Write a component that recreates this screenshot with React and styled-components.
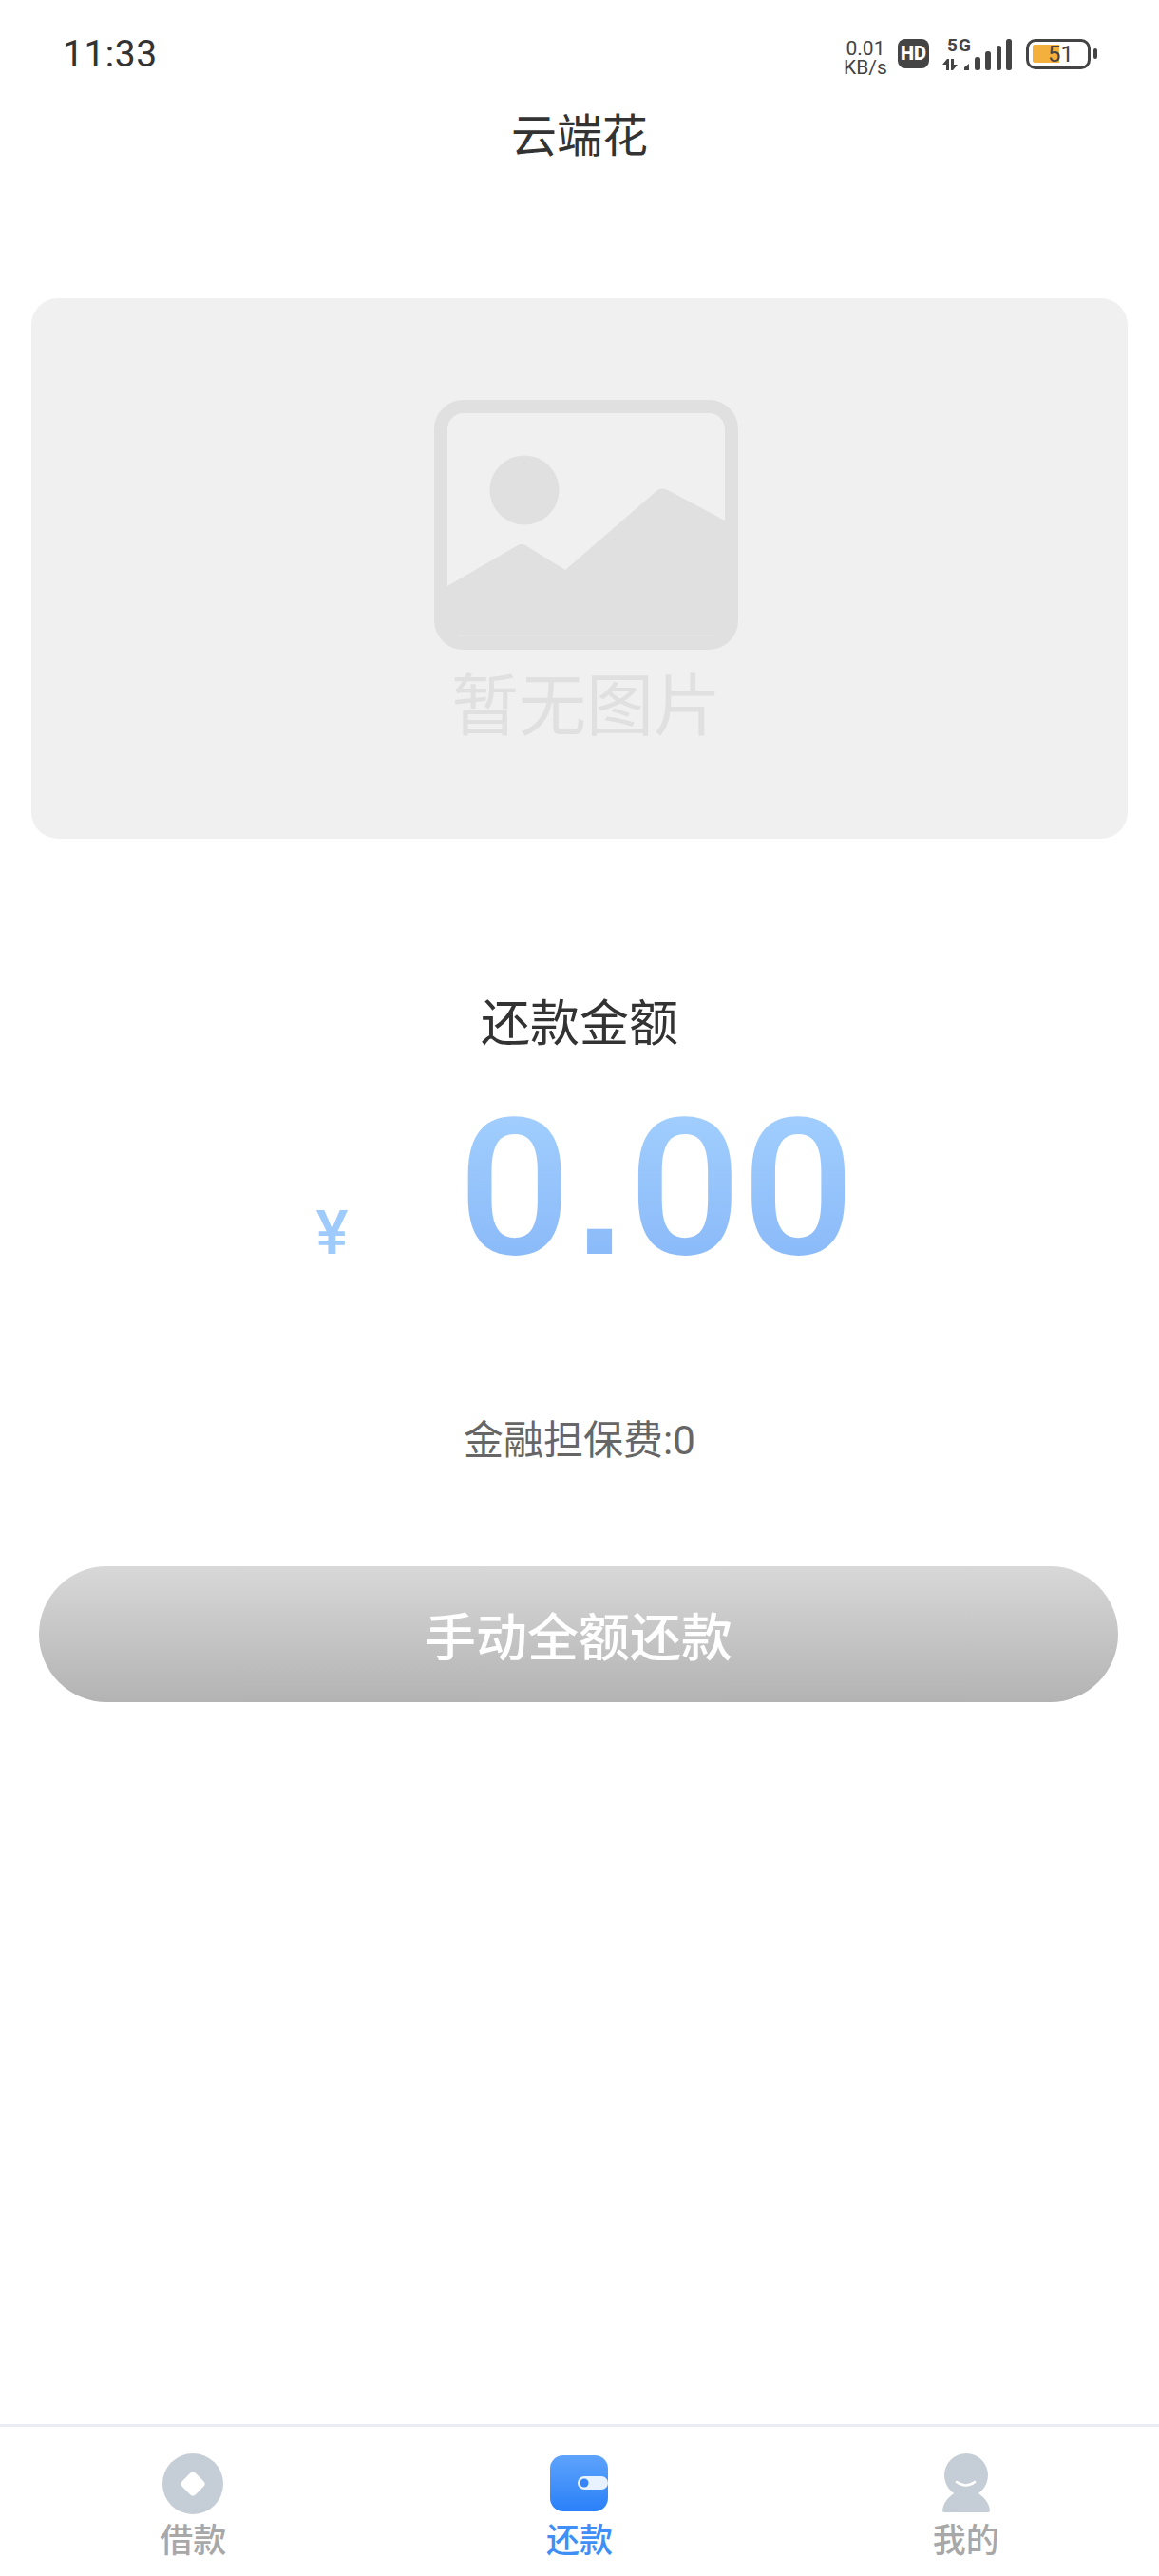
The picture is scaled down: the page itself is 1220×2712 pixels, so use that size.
import React from "react";
import styled, { createGlobalStyle } from "styled-components";

const GlobalStyle = createGlobalStyle`
  html, body {
    margin: 0;
    padding: 0;
    background: #fff;
  }
  * {
    box-sizing: border-box;
  }
`;

const CJK = `Roboto, "Noto Sans CJK SC", sans-serif`;

const Page = styled.div`
  width: 1220px;
  height: 2712px;
  display: flex;
  flex-direction: column;
  background: #fff;
  font-family: ${CJK};
  overflow: hidden;
`;

const StatusBar = styled.div`
  height: 73px;
  padding: 40px 65px 0 66px;
  display: flex;
  justify-content: space-between;
  align-items: flex-start;
  color: #444;
`;

const Time = styled.div`
  font-size: 39px;
  line-height: 34px;
  letter-spacing: 0.5px;
  color: #333;
`;

const StatusIcons = styled.div`
  display: flex;
  align-items: flex-start;
`;

const Speed = styled.div`
  width: 48px;
  margin: 1px 10px 0 0;
  font-size: 21px;
  line-height: 20px;
  text-align: center;
`;

const HdBadge = styled.div`
  width: 33px;
  height: 31px;
  margin: 1px 13px 0 0;
  border-radius: 8px;
  background: #444;
  color: #fff;
  font-size: 20px;
  font-weight: 900;
  line-height: 31px;
  text-align: center;
`;

const Signal = styled.div`
  position: relative;
  width: 74px;
  height: 34px;
  margin-right: 15px;
`;

const FiveG = styled.span`
  position: absolute;
  left: 6px;
  top: 0;
  font-size: 19px;
  font-weight: 700;
  line-height: 16px;
  letter-spacing: 1px;
`;

const Battery = styled.div`
  position: relative;
  width: 68px;
  height: 32px;
  margin-top: 1px;
  border: 3px solid #444;
  border-radius: 10px;
`;

const BatteryFill = styled.div`
  width: 28px;
  height: 19px;
  margin: 3px 0 0 4px;
  border-radius: 2px 0 0 2px;
  background: #f4b03c;
`;

const BatteryLevel = styled.span`
  position: absolute;
  left: 20px;
  top: 0;
  font-size: 24px;
  line-height: 26px;
`;

const BatteryNub = styled.div`
  width: 4px;
  height: 11px;
  margin: 11px 0 0 3px;
  border-radius: 2px;
  background: #444;
`;

const Title = styled.h1`
  margin: 35px 0 0;
  font-size: 48px;
  font-weight: 400;
  line-height: 72px;
  color: #333;
  text-align: center;
`;

const Banner = styled.div`
  height: 569px;
  margin: 134px 33px 0;
  padding: 107px 0 0 14px;
  display: flex;
  flex-direction: column;
  align-items: center;
  background: #f0f0f0;
  border-radius: 28px;
`;

const BannerIcon = styled.svg`
  display: block;
  width: 320px;
  height: 263px;
`;

const BannerText = styled.div`
  margin-top: 14px;
  font-size: 71px;
  line-height: 92px;
  color: #e0e0e0;
`;

const AmountLabel = styled.div`
  margin-top: 160px;
  font-size: 52px;
  line-height: 72px;
  color: #333;
  text-align: center;
`;

const AmountRow = styled.div`
  margin-top: 42px;
  display: flex;
  justify-content: center;
  align-items: baseline;
  gap: 125px;
  padding-left: 2px;
`;

const Currency = styled.span`
  font-size: 64px;
  font-weight: 500;
  line-height: 70px;
  color: #9fcbfc;
`;

const Amount = styled.span`
  background: linear-gradient(180deg, #a3d0fe 0%, #86b6f8 100%);
  -webkit-background-clip: text;
  background-clip: text;
  color: transparent;
  font-size: 200px;
  font-weight: 500;
  line-height: 190px;
  transform: scaleX(1.05);
`;

// the reference has a square point, Roboto's is round
const AmountPoint = styled.span`
  margin: 0 4px;
  font-family: "Liberation Sans", sans-serif;
  font-size: 176px;
  font-weight: 700;
`;

const Fee = styled.div`
  margin-top: 133px;
  font-size: 42px;
  line-height: 60px;
  color: #666;
  text-align: center;
`;

const RepayButton = styled.button`
  display: block;
  width: 1136px;
  height: 143px;
  margin: 102px 0 0 41px;
  padding: 0;
  border: 0;
  border-radius: 72px;
  background: linear-gradient(180deg, #d8d8d8 0%, #b3b3b3 100%);
  color: #fff;
  font-family: ${CJK};
  font-size: 54px;
  font-weight: 500;
`;

const TabBar = styled.nav`
  margin-top: auto;
  height: 160px;
  padding-top: 28px;
  display: grid;
  grid-template-columns: repeat(3, 1fr);
  border-top: 3px solid #e9ecf1;
`;

const Tab = styled.div`
  display: flex;
  flex-direction: column;
  align-items: center;
  color: ${(p) => (p.$active ? "#3e8ff6" : "#a8a8a8")};
`;

const TabIcon = styled.svg`
  display: block;
  height: 64px;
`;

const TabLabel = styled.span`
  margin-top: 6px;
  font-size: 35px;
  font-weight: 500;
  line-height: 46px;
`;

function SignalIcon() {
  return (
    <svg width="74" height="34" viewBox="0 0 74 34" fill="#444">
      <path d="M1 28 L6 22 H8 V34 H5 V28 Z" />
      <path d="M10 22 H13 V28 H17 L12 34 H10 Z" />
      <path d="M24 34 V31 L29 27 V34 Z" />
      <rect x="35" y="20" width="6" height="14" rx="2.5" />
      <rect x="46" y="14" width="6" height="20" rx="2.5" />
      <rect x="58" y="8" width="5" height="26" rx="2.5" />
      <rect x="68" y="1" width="6" height="33" rx="2.5" />
    </svg>
  );
}

function PlaceholderIcon() {
  return (
    <BannerIcon viewBox="0 0 320 263">
      <rect x="7" y="7" width="306" height="249" rx="24" fill="none" stroke="#e0e0e0" strokeWidth="14" />
      <circle cx="95" cy="95" r="36.5" fill="#e0e0e0" />
      <path
        d="M14 196 L88 153 Q92 151 96 153 L138 179 L235 95 Q240 92 246 95 L306 127 V250 H14 Z"
        fill="#e0e0e0"
      />
      <rect x="25" y="247" width="270" height="2" fill="#e4e4e4" />
    </BannerIcon>
  );
}

function CoinIcon() {
  return (
    <TabIcon viewBox="0 0 64 64" width="64">
      <circle cx="32" cy="32" r="32" fill="#c5ced6" />
      <rect x="22" y="22" width="20" height="20" rx="4" fill="#fff" transform="rotate(45 32 32)" />
    </TabIcon>
  );
}

function WalletIcon() {
  return (
    <TabIcon viewBox="0 0 61 64" width="61">
      <defs>
        <linearGradient id="wallet" x1="0" y1="0" x2="0" y2="1">
          <stop offset="0" stopColor="#5ea3fc" />
          <stop offset="1" stopColor="#2a80f8" />
        </linearGradient>
      </defs>
      <rect x="0" y="2" width="61" height="59" rx="14" fill="url(#wallet)" />
      <path d="M36 24 H54 A7 7 0 0 1 61 31 A7 7 0 0 1 54 38 H36 A7 7 0 0 1 36 24 Z" fill="#e8f1fe" />
      <circle cx="36" cy="31" r="4.5" fill="#3585f8" />
    </TabIcon>
  );
}

function PersonIcon() {
  return (
    <TabIcon viewBox="0 0 50 64" width="50">
      <circle cx="25" cy="23" r="23" fill="#c5ced6" />
      <path
        d="M0 60 C1 50 9 43 18 39 L32 39 C41 43 49 50 50 60 Q50 62 48 62 L2 62 Q0 62 0 60 Z"
        fill="#c5ced6"
      />
      <path d="M15 30 Q25 37 34 30" fill="none" stroke="#fff" strokeWidth="2.6" strokeLinecap="round" />
    </TabIcon>
  );
}

export default function App() {
  return (
    <Page>
      <GlobalStyle />
      <StatusBar>
        <Time>11:33</Time>
        <StatusIcons>
          <Speed>
            0.01
            <br />
            KB/s
          </Speed>
          <HdBadge>HD</HdBadge>
          <Signal>
            <FiveG>5G</FiveG>
            <SignalIcon />
          </Signal>
          <Battery>
            <BatteryFill />
            <BatteryLevel>51</BatteryLevel>
          </Battery>
          <BatteryNub />
        </StatusIcons>
      </StatusBar>
      <Title>云端花</Title>
      <Banner>
        <PlaceholderIcon />
        <BannerText>暂无图片</BannerText>
      </Banner>
      <AmountLabel>还款金额</AmountLabel>
      <AmountRow>
        <Currency>¥</Currency>
        <Amount>
          0<AmountPoint>.</AmountPoint>00
        </Amount>
      </AmountRow>
      <Fee>金融担保费:0</Fee>
      <RepayButton>手动全额还款</RepayButton>
      <TabBar>
        <Tab>
          <CoinIcon />
          <TabLabel>借款</TabLabel>
        </Tab>
        <Tab $active>
          <WalletIcon />
          <TabLabel>还款</TabLabel>
        </Tab>
        <Tab>
          <PersonIcon />
          <TabLabel>我的</TabLabel>
        </Tab>
      </TabBar>
    </Page>
  );
}
